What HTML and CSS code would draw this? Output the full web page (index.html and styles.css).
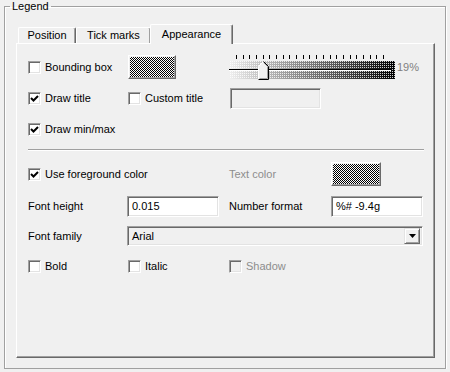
FILE: index.html
```html
<!DOCTYPE html>
<html lang="en">
<head>
    <meta charset="UTF-8" />
    <title>Legend</title>
    <link rel="stylesheet" href="styles.css">
</head>
<body>
<fieldset class="group">
    <legend>Legend</legend>
    <div class="tabs">
        <div class="tab t1">Position</div>
        <div class="tab t2">Tick marks</div>
        <div class="tab t3 active">Appearance</div>
    </div>
    <div class="panel">
        <div class="row r1">
            <label class="check"><span class="box"></span>Bounding box</label>
            <span class="swatch small"></span>
            <div class="slider">
                <div class="slider-body">
                    <div class="ticks"></div>
                    <div class="band">
                        <span class="groove"></span>
                        <svg class="thumb" width="11" height="19" viewBox="0 0 11 19">
                            <polygon points="0.5,5.5 5.5,0.5 10.5,5.5 10.5,18.5 0.5,18.5" fill="#f0f0f0" stroke="#fff"/>
                            <polyline points="5.5,0.5 10.5,5.5 10.5,18.5 0.5,18.5" fill="none" stroke="#000"/>
                            <polyline points="5.5,1.5 9.5,5.5 9.5,17.5 1.5,17.5" fill="none" stroke="#a0a0a0"/>
                        </svg>
                    </div>
                </div>
                <span class="pct">19%</span>
            </div>
        </div>
        <div class="row r2">
            <label class="check"><span class="box on"><svg width="9" height="9" viewBox="0 0 9 9"><path d="M1 4 L3.5 6.5 L8 2" fill="none" stroke="#000" stroke-width="2"/></svg></span>Draw title</label>
            <label class="check shift"><span class="box"></span>Custom title</label>
            <span class="field off shift w91"></span>
        </div>
        <div class="row r3">
            <label class="check"><span class="box on"><svg width="9" height="9" viewBox="0 0 9 9"><path d="M1 4 L3.5 6.5 L8 2" fill="none" stroke="#000" stroke-width="2"/></svg></span>Draw min/max</label>
        </div>
        <div class="sep"></div>
        <div class="row r4">
            <label class="check span2"><span class="box on"><svg width="9" height="9" viewBox="0 0 9 9"><path d="M1 4 L3.5 6.5 L8 2" fill="none" stroke="#000" stroke-width="2"/></svg></span>Use foreground color</label>
            <span class="muted">Text color</span>
            <span class="swatch wide"></span>
        </div>
        <div class="row r5">
            <span>Font height</span>
            <span class="field w92">0.015</span>
            <span>Number format</span>
            <span class="field w92">%# -9.4g</span>
        </div>
        <div class="row r6">
            <span>Font family</span>
            <div class="select">
                <span>Arial</span>
                <span class="arrow"><svg width="7" height="4" viewBox="0 0 7 4"><polygon points="0,0 7,0 3.5,4" fill="#000"/></svg></span>
            </div>
        </div>
        <div class="row r7">
            <label class="check"><span class="box"></span>Bold</label>
            <label class="check shift"><span class="box"></span>Italic</label>
            <label class="check disabled"><span class="box"></span>Shadow</label>
        </div>
    </div>
</fieldset>
</body>
</html>
```

FILE: styles.css
```css
body {
    margin: 0;
    background: #f0f0f0;
    font-family: 'Liberation Sans', Arial, sans-serif;
    font-size: 11px;
    color: #000;
}
.group {
    margin: 0 4px 0 4px;
    padding: 11px 10px 10px 11px;
    border: 1px solid #a0a0a0;
    box-shadow: 1px 1px 0 #fff, inset 1px 1px 0 #fff;
    height: 369px;
    box-sizing: border-box;
}
.group legend {
    padding: 0 2px;
    margin-left: -6px;
    line-height: 13px;
}
.tabs {
    display: flex;
    align-items: flex-end;
    height: 19px;
    margin-left: 2px;
    position: relative;
    z-index: 1;
}
.tab {
    height: 16px;
    line-height: 15px;
    text-align: center;
    border-top: 1px solid #fff;
    border-left: 1px solid #fff;
    border-right: 1px solid #696969;
    box-shadow: inset -1px 0 0 #a0a0a0;
    border-radius: 2px 2px 0 0;
    box-sizing: border-box;
}
.t1 { width: 58px; }
.t2 { width: 75px; }
.t3 { width: 83px; }
.tab.active {
    height: 20px;
    margin-bottom: -1px;
    line-height: 18px;
    background: #f0f0f0;
    margin-left: -1px;
}
.panel {
    height: 315px;
    box-sizing: border-box;
    border-top: 1px solid #fff;
    border-left: 1px solid #fff;
    border-right: 1px solid #696969;
    border-bottom: 1px solid #696969;
    box-shadow: inset -1px -1px 0 #a0a0a0;
    padding: 11px 0 0 11px;
}
.row {
    display: grid;
    grid-template-columns: 99px 102px 102px 91px;
    align-items: center;
    height: 24px;
}
.r2, .r3 { margin-top: 7px; }
.r4 { margin-top: 11px; }
.r5 { margin-top: 8px; }
.r6, .r7 { margin-top: 6px; }
.check {
    display: flex;
    align-items: center;
    white-space: nowrap;
}
.check.shift, .field.shift { margin-left: 1px; }
.span2 { grid-column: span 2; }
.box {
    width: 13px;
    height: 13px;
    box-sizing: border-box;
    margin-right: 4px;
    border: 1px solid;
    border-color: #a0a0a0 #fff #fff #a0a0a0;
    box-shadow: inset 1px 1px 0 #696969, inset -1px -1px 0 #e3e3e3;
    background: #fff;
    display: flex;
    align-items: center;
    justify-content: center;
}
.disabled { color: #8d8d8d; }
.disabled .box { background: #f0f0f0; }
.muted { color: #8d8d8d; }
.swatch {
    height: 24px;
    box-sizing: border-box;
    border: 1px solid;
    border-color: #fff #696969 #696969 #fff;
    box-shadow: inset -1px -1px 0 #a0a0a0;
    padding: 1px;
    background: repeating-conic-gradient(#000 0 25%, #fff 0 50%) 0 0 / 2px 2px content-box;
}
.swatch.small { width: 48px; margin-left: 1px; }
.swatch.wide { width: 50px; }
.slider {
    grid-column: span 2;
    display: flex;
    align-items: center;
}
.slider-body {
    width: 166px;
}
.ticks {
    height: 4px;
    margin: 0 7px 2px 7px;
    background: repeating-linear-gradient(to right, #000 0 1px, transparent 1px 6.68px);
}
.band {
    position: relative;
    height: 18px;
    background:
        conic-gradient(from 0deg at 1px 1px, rgba(255,255,255,0.8) 0 25%, transparent 0) 0 0 / 2px 2px,
        linear-gradient(to right, #f0f0f0, #000);
}
.groove {
    position: absolute;
    left: 0;
    right: 4px;
    top: 8px;
    height: 1px;
    background: #000;
    border-bottom: 1px solid #fff;
}
.thumb {
    position: absolute;
    left: 29px;
    top: 0;
}
.pct {
    color: #808080;
    margin-left: 2px;
}
.field {
    height: 21px;
    box-sizing: border-box;
    border: 1px solid;
    border-color: #a0a0a0 #fff #fff #a0a0a0;
    box-shadow: inset 1px 1px 0 #696969, inset -1px -1px 0 #e3e3e3;
    background: #fff;
    padding: 3px 4px;
    line-height: 13px;
}
.field.off { background: #f0f0f0; }
.w91 { width: 91px; }
.w92 { width: 92px; }
.select {
    grid-column: span 3;
    width: 296px;
    height: 20px;
    box-sizing: border-box;
    border: 1px solid;
    border-color: #a0a0a0 #fff #fff #a0a0a0;
    box-shadow: inset 1px 1px 0 #696969, inset -1px -1px 0 #e3e3e3;
    display: flex;
    align-items: center;
    justify-content: space-between;
    padding: 2px 2px 2px 4px;
}
.arrow {
    width: 16px;
    height: 16px;
    box-sizing: border-box;
    border: 1px solid;
    border-color: #e3e3e3 #696969 #696969 #e3e3e3;
    box-shadow: inset 1px 1px 0 #fff, inset -1px -1px 0 #a0a0a0;
    display: flex;
    align-items: center;
    justify-content: center;
}
.sep {
    height: 1px;
    margin: 8px 10px 0 0;
    background: #a0a0a0;
    border-bottom: 1px solid #fff;
}
```
